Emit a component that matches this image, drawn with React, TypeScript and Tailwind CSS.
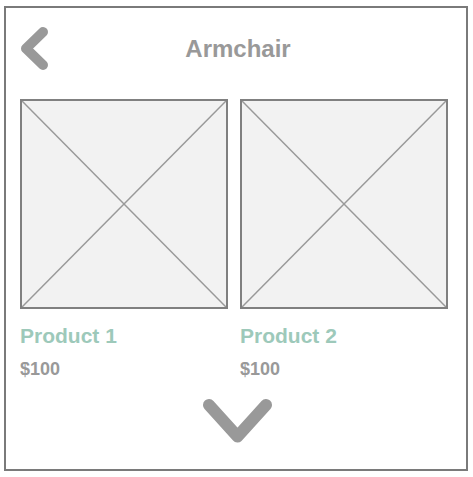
const products = [
  { name: 'Product 1', price: '$100' },
  { name: 'Product 2', price: '$100' },
]

const Placeholder = () => (
  <div className="relative h-[210px] w-full border-2 border-[#808080] bg-[#f2f2f2]">
    <svg className="absolute inset-0 h-full w-full" preserveAspectRatio="none" viewBox="0 0 100 100">
      <line x1="0" y1="0" x2="100" y2="100" stroke="#999999" strokeWidth="1.5" vectorEffect="non-scaling-stroke" />
      <line x1="100" y1="0" x2="0" y2="100" stroke="#999999" strokeWidth="1.5" vectorEffect="non-scaling-stroke" />
    </svg>
  </div>
)

export default function App() {
  return (
    <div className="h-[477px] w-[473px] bg-white pl-[4px] pt-[6px] font-['Liberation_Sans',Arial,sans-serif]">
      <div className="flex h-[465px] w-[464px] flex-col border-2 border-[#7a7a7a] pl-[14px] pr-[18px] pt-[19px]">
        <header className="flex items-center">
          <svg width="28" height="43" viewBox="0 0 28 43" className="shrink-0">
            <polyline points="23,5 6,21.5 23,38" fill="none" stroke="#999999" strokeWidth="10" strokeLinecap="round" strokeLinejoin="round" />
          </svg>
          <h1 className="flex-1 pl-[8px] text-center text-[24px] font-bold leading-none text-[#999999]">Armchair</h1>
          <div className="w-[28px] shrink-0" />
        </header>
        <div className="mt-[29px] grid grid-cols-2 gap-x-[12px]">
          {products.map((p) => (
            <div key={p.name}>
              <Placeholder />
              <div className="mt-[16px] text-[21px] font-bold leading-none text-[#9dc9ba]">{p.name}</div>
              <div className="mt-[14px] text-[18px] font-bold leading-none text-[#999999]">{p.price}</div>
            </div>
          ))}
        </div>
        <div className="mt-[21px] flex justify-center pl-[7px]">
          <svg width="69" height="44" viewBox="0 0 69 44">
            <polyline points="6,6 34.5,37.5 63,6" fill="none" stroke="#999999" strokeWidth="12" strokeLinecap="round" strokeLinejoin="round" />
          </svg>
        </div>
      </div>
    </div>
  )
}
